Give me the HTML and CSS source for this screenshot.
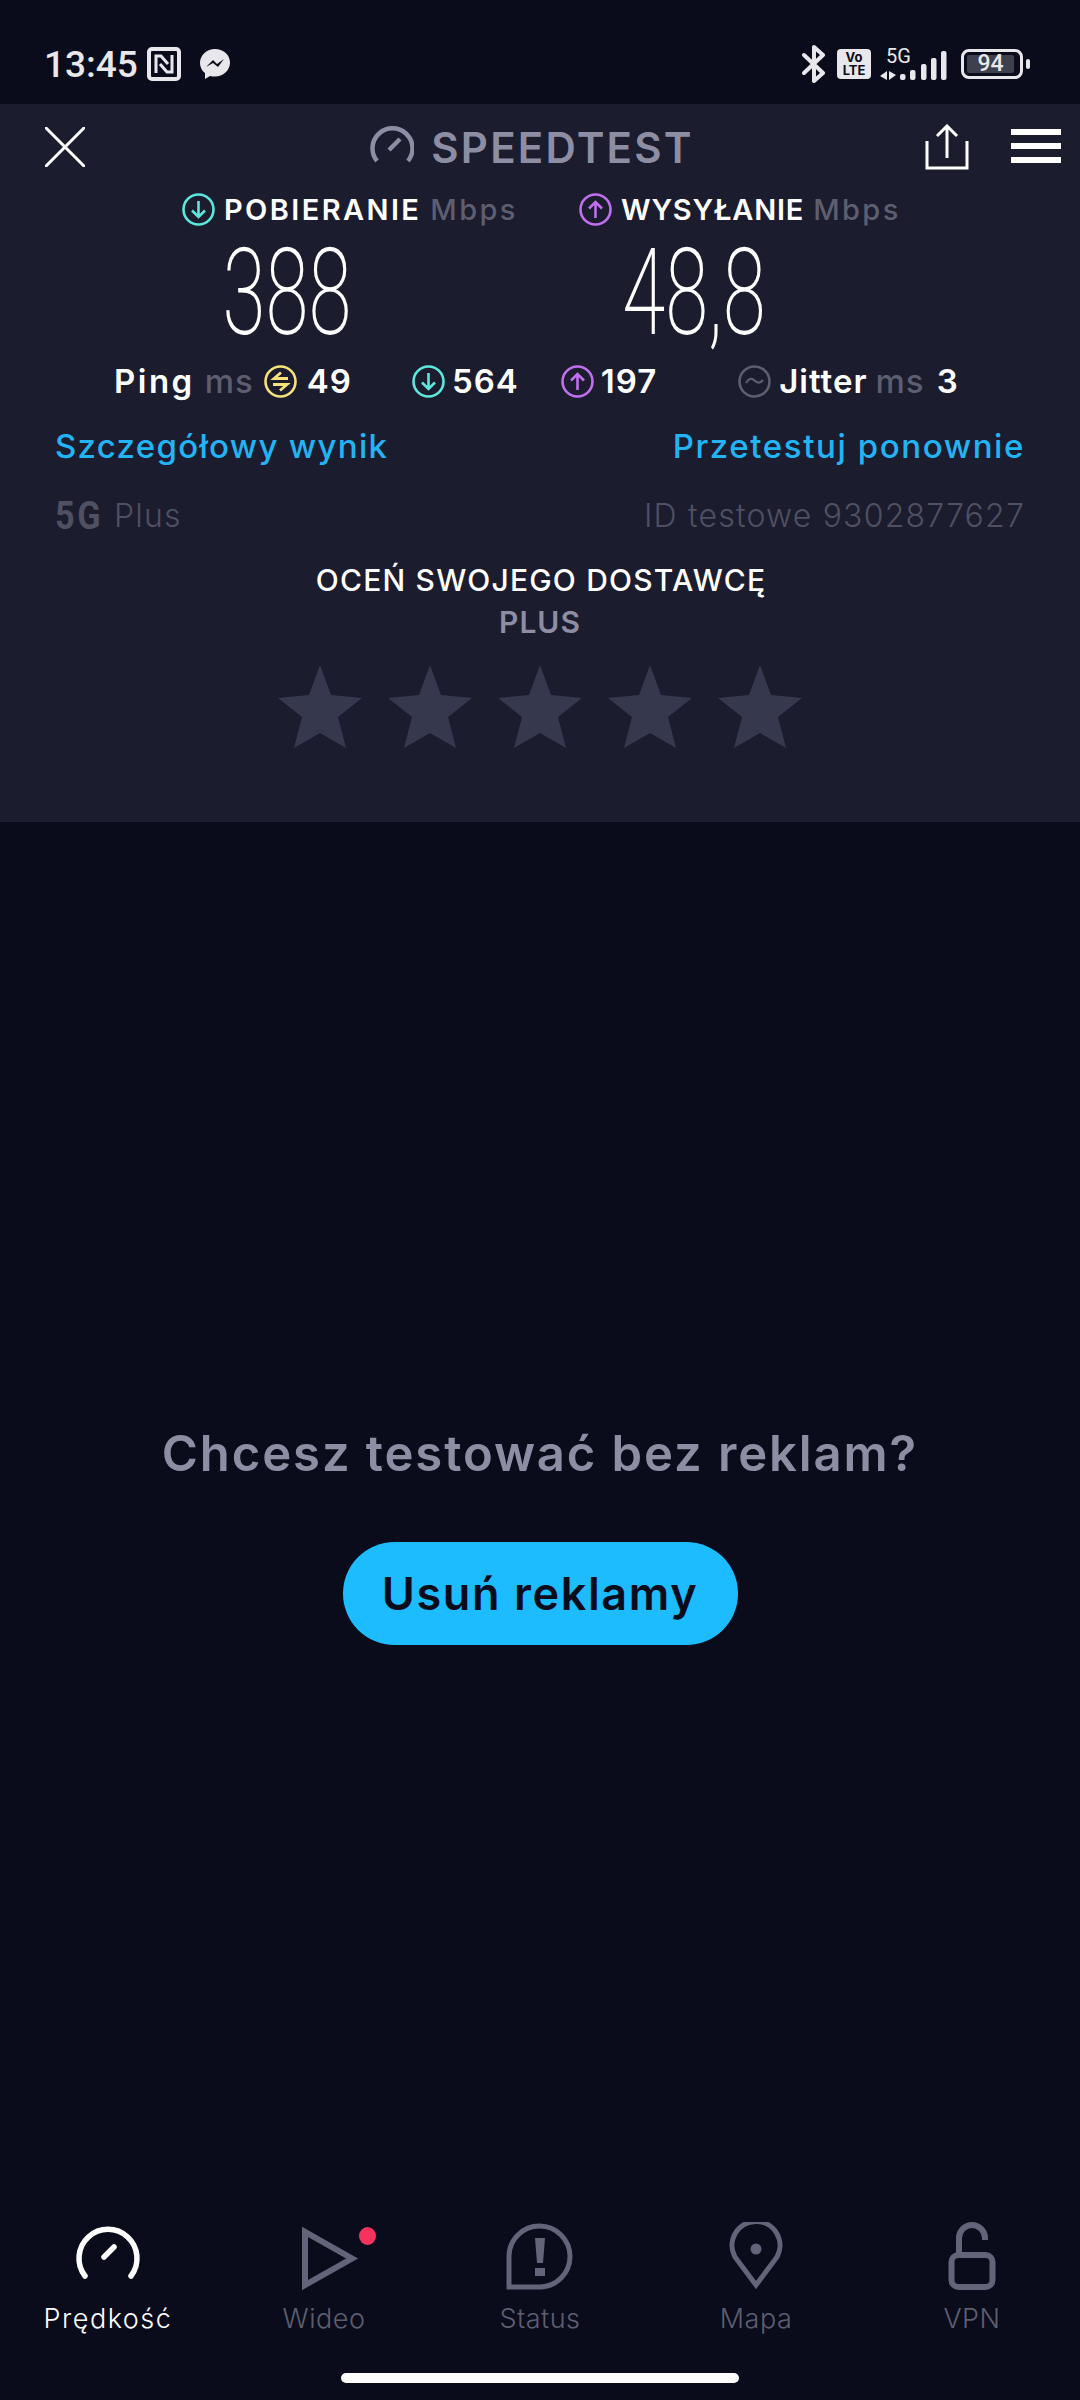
FILE: index.html
```html
<!DOCTYPE html>
<html lang="pl">
<head>
    <meta charset="UTF-8">
    <title>Speedtest</title>
    <link rel="stylesheet" href="styles.css">
</head>
<body>

    <div class="status-bar">
        <div class="status-left">
            <span class="time">13:45</span>
            <svg class="nfc" viewBox="0 0 34 34"><rect x="2" y="2" width="30" height="30" rx="3" fill="#0a0c1b" stroke="#e8e8ec" stroke-width="4"/><path d="M9 26V9h5l7 8M25 8v17h-5l-7-8" fill="none" stroke="#e8e8ec" stroke-width="3"/></svg>
            <svg class="messenger" viewBox="0 0 30 32"><path d="M15 1C7 1 0 7 0 15c0 4 2 8 5 10v6l5-3c2 .5 3 .6 5 .6 8 0 15-6 15-14S23 1 15 1z" fill="#e8e8ec"/><path d="M6 19l7-7 4 4 7-5-6 8-5-4z" fill="#0a0c1b"/></svg>
        </div>
        <div class="status-right">
            <svg class="bt" viewBox="0 0 24 38"><path d="M2 10l19 18-9 8V2l9 8L2 28" fill="none" stroke="#e8e8ec" stroke-width="4" stroke-linejoin="round" stroke-linecap="round"/></svg>
            <div class="volte"><span>Vo</span><span>LTE</span></div>
            <div class="signal">
                <span class="five-g">5G</span>
                <svg viewBox="0 0 67 36"><path d="M7 25v9L0 30zM9 25v9l7-5z" fill="#e8e8ec"/><rect x="20" y="28" width="5.500" height="6" rx="2" fill="#e8e8ec"/><rect x="30" y="24" width="5.500" height="10" rx="2" fill="#e8e8ec"/><rect x="41" y="18" width="5.500" height="16" rx="2" fill="#e8e8ec"/><rect x="51" y="12" width="5.500" height="22" rx="2" fill="#e8e8ec"/><rect x="61" y="5" width="5.500" height="29" rx="2" fill="#e8e8ec"/></svg>
            </div>
            <div class="battery">
                <div class="battery-body"><div class="battery-fill">94</div></div>
                <div class="battery-tip"></div>
            </div>
        </div>
    </div>

    <div class="panel">
        <div class="app-bar">
            <svg class="close-icon" viewBox="0 0 40 40"><path d="M1 1l38 38M39 1L1 39" stroke="#fff" stroke-width="3" stroke-linecap="round"/></svg>
            <div class="app-title">
                <svg class="title-gauge" viewBox="0 0 44 40"><path d="M7 36a20 20 0 1 1 31 0" fill="none" stroke="#8d8ea3" stroke-width="4.500"/><path d="M19 25l11-11" stroke="#8d8ea3" stroke-width="4.500"/></svg>
                <span>SPEEDTEST</span>
            </div>
            <svg class="share-icon" viewBox="0 0 44 46"><path d="M2 17v27h40V17M22 34V3M12 12l10-10 10 10" fill="none" stroke="#fff" stroke-width="3"/></svg>
            <div class="menu-icon"><i></i><i></i><i></i></div>
        </div>

        <div class="results">
            <div class="result">
                <div class="result-label">
                    <svg class="dot-icon" viewBox="0 0 33 33"><circle cx="16.500" cy="16.500" r="15" fill="none" stroke="#5ce8dd" stroke-width="2.600"/><path d="M16.500 8v16M10 17.500l6.500 6.500 6.500-6.500" fill="none" stroke="#5ce8dd" stroke-width="2.600"/></svg>
                    <b>POBIERANIE</b> <em>Mbps</em>
                </div>
                <div class="big-number">388</div>
            </div>
            <div class="result result-up">
                <div class="result-label">
                    <svg class="dot-icon" viewBox="0 0 33 33"><circle cx="16.500" cy="16.500" r="15" fill="none" stroke="#c070ee" stroke-width="2.600"/><path d="M16.500 25V9M10 15.500L16.500 9l6.500 6.500" fill="none" stroke="#c070ee" stroke-width="2.600"/></svg>
                    <b>WYSYŁANIE</b> <em>Mbps</em>
                </div>
                <div class="big-number">48,8</div>
            </div>
        </div>

        <div class="stats">
            <div class="stat stat-ping">
                <b class="ping-name">Ping</b> <em>ms</em>
                <svg class="dot-icon" viewBox="0 0 33 33"><circle cx="16.500" cy="16.500" r="15" fill="none" stroke="#f6e27a" stroke-width="2.600"/><path d="M24 13.500H10l7-6M9 19.500h14l-7 6" fill="none" stroke="#f6e27a" stroke-width="2.800"/></svg>
                <b>49</b>
            </div>
            <div class="stat stat-down">
                <svg class="dot-icon" viewBox="0 0 33 33"><circle cx="16.500" cy="16.500" r="15" fill="none" stroke="#5ce8dd" stroke-width="2.600"/><path d="M16.500 8v16M10 17.500l6.500 6.500 6.500-6.500" fill="none" stroke="#5ce8dd" stroke-width="2.600"/></svg>
                <b>564</b>
            </div>
            <div class="stat stat-up">
                <svg class="dot-icon" viewBox="0 0 33 33"><circle cx="16.500" cy="16.500" r="15" fill="none" stroke="#c070ee" stroke-width="2.600"/><path d="M16.500 25V9M10 15.500L16.500 9l6.500 6.500" fill="none" stroke="#c070ee" stroke-width="2.600"/></svg>
                <b>197</b>
            </div>
            <div class="stat stat-jitter">
                <svg class="dot-icon" viewBox="0 0 33 33"><circle cx="16.500" cy="16.500" r="15" fill="none" stroke="#5d5e70" stroke-width="2.600"/><path d="M8 18c3-5 6-5 8.500-2.500S22 19 25 15" fill="none" stroke="#5d5e70" stroke-width="2.200"/></svg>
                <b>Jitter</b> <em>ms</em> <b class="jitter-val">3</b>
            </div>
        </div>

        <div class="links">
            <span>Szczegółowy wynik</span>
            <span class="retest">Przetestuj ponownie</span>
        </div>

        <div class="meta">
            <div class="carrier"><span class="carrier-5g">5G</span> Plus</div>
            <div>ID testowe 9302877627</div>
        </div>

        <div class="rate-title">OCEŃ SWOJEGO DOSTAWCĘ</div>
        <div class="rate-name">PLUS</div>
        <div class="stars">
            <svg viewBox="0 0 86 84"><path d="M43 0l11 30 31 3-24 19 8 31-26-15-26 15 8-31L1 33l31-3z"/></svg>
            <svg viewBox="0 0 86 84"><path d="M43 0l11 30 31 3-24 19 8 31-26-15-26 15 8-31L1 33l31-3z"/></svg>
            <svg viewBox="0 0 86 84"><path d="M43 0l11 30 31 3-24 19 8 31-26-15-26 15 8-31L1 33l31-3z"/></svg>
            <svg viewBox="0 0 86 84"><path d="M43 0l11 30 31 3-24 19 8 31-26-15-26 15 8-31L1 33l31-3z"/></svg>
            <svg viewBox="0 0 86 84"><path d="M43 0l11 30 31 3-24 19 8 31-26-15-26 15 8-31L1 33l31-3z"/></svg>
        </div>
    </div>

    <div class="promo">
        <h2>Chcesz testować bez reklam?</h2>
        <button class="remove-btn">Usuń reklamy</button>
    </div>

    <div class="tabs">
        <div class="tab active">
            <svg viewBox="0 0 70 70"><path d="M12 54a29 29 0 1 1 46 0" fill="none" stroke="#fff" stroke-width="5.500" stroke-linecap="round"/><path d="M31 35l10-10" stroke="#fff" stroke-width="5.500" stroke-linecap="round"/></svg>
            <span>Prędkość</span>
        </div>
        <div class="tab">
            <svg viewBox="0 0 70 70"><path d="M16 10v53l47-26.500z" fill="none" stroke="#62647a" stroke-width="6"/></svg>
            <i class="tab-dot"></i>
            <span>Wideo</span>
        </div>
        <div class="tab">
            <svg viewBox="0 0 70 70"><path d="M4 65V34a30.500 30.500 0 1 1 31 31z" fill="none" stroke="#62647a" stroke-width="5"/><path d="M30 16h10l-2 25h-6zM30 46h10v8h-10z" fill="#62647a"/></svg>
            <span>Status</span>
        </div>
        <div class="tab">
            <svg viewBox="0 0 70 70"><path d="M35 63L14 35a24 24 0 1 1 42 0z" fill="none" stroke="#62647a" stroke-width="5"/><circle cx="35" cy="27" r="5.500" fill="#62647a"/></svg>
            <span>Mapa</span>
        </div>
        <div class="tab">
            <svg viewBox="0 0 70 70"><rect x="14.500" y="33" width="41" height="32" rx="7" fill="none" stroke="#62647a" stroke-width="6"/><path d="M22 33V16a13 13 0 0 1 26 0v2" fill="none" stroke="#62647a" stroke-width="6"/></svg>
            <span>VPN</span>
        </div>
    </div>

    <div class="home-bar"></div>

</body>
</html>
```

FILE: styles.css
```css
* { margin: 0; padding: 0; box-sizing: border-box; }
body {
    width: 1080px; height: 2400px; overflow: hidden;
    background: #0a0c1b; color: #fff;
    font-family: Inter, "Noto Sans", sans-serif;
    display: flex; flex-direction: column;
}
b { font-weight: 600; }
em { font-style: normal; font-weight: 500; color: #5d5e70; }

/* status bar */
.status-bar {
    height: 104px; flex: none; padding: 24px 50px 0 44px;
    display: flex; justify-content: space-between; align-items: center;
}
.status-bar > div { display: flex; align-items: center; }
.time { font-family: Roboto, sans-serif; font-size: 37px; font-weight: 500; color: #e8e8ec; }
.nfc { width: 34px; height: 34px; margin-left: 9px; }
.messenger { width: 30px; height: 32px; margin-left: 19px; }
.bt { width: 24px; height: 38px; }
.volte {
    width: 34px; height: 30px; margin-left: 11px; background: #e8e8ec; border-radius: 4px;
    display: flex; flex-direction: column; align-items: center; justify-content: center;
    font-size: 13px; line-height: 13px; font-weight: 700; color: #0a0c1b;
}
.signal { position: relative; width: 67px; height: 36px; margin-left: 9px; }
.signal svg { display: block; width: 67px; height: 36px; }
.five-g {
    position: absolute; left: 6px; top: 0;
    font-family: Roboto, sans-serif; font-size: 20px; line-height: 20px; color: #e8e8ec;
}
.battery { display: flex; align-items: center; margin-left: 14px; }
.battery-body { width: 62px; height: 30px; border: 3px solid #e8e8ec; border-radius: 8px; padding: 3px 6px 3px 3px; }
.battery-fill {
    height: 18px; background: #3f404e; border-radius: 2px;
    font-family: Roboto, sans-serif; font-size: 23px; line-height: 18px; font-weight: 500; text-align: center; color: #e8e8ec;
}
.battery-tip { width: 4px; height: 10px; margin-left: 3px; background: #e8e8ec; border-radius: 2px; }

/* results panel */
.panel { height: 718px; flex: none; background: #1b1c2e; }
.app-bar { height: 86px; position: relative; display: flex; align-items: center; padding: 0 19px 0 45px; }
.close-icon { width: 40px; height: 40px; }
.app-title {
    flex: 1; display: flex; align-items: center; justify-content: center; gap: 17px;
    font-size: 42px; font-weight: 600; color: #8d8ea3; letter-spacing: 2.2px; margin-left: 54px;
}
.title-gauge { width: 44px; height: 40px; margin-top: -4px; }
.share-icon { width: 44px; height: 46px; margin-right: 42px; }
.menu-icon { width: 50px; display: flex; flex-direction: column; gap: 8px; margin-top: -2px; }
.menu-icon i { display: block; height: 6px; background: #fff; }

.results { display: flex; height: 168px; margin-top: 1px; }
.result { width: 397px; margin-left: 182px; }
.result-up { margin-left: 0; }
.result-label { height: 36px; display: flex; align-items: center; gap: 9px; font-size: 29px; letter-spacing: 2.4px; white-space: nowrap; }
.result-up b { letter-spacing: 0.8px; }
.dot-icon { width: 33px; height: 33px; flex: none; }
.big-number {
    width: 400px; margin-left: -95px; margin-top: 4px; text-align: center;
    font-family: Roboto, sans-serif; font-weight: 200; font-size: 120px; line-height: 125px;
    transform: scaleX(0.65);
}
.result-up .big-number { margin-left: -85px; }

.stats { height: 44px; padding-left: 114px; display: flex; align-items: center; font-size: 33px; letter-spacing: 1px; white-space: nowrap; }
.stat { display: flex; align-items: center; gap: 8px; }
.ping-name { letter-spacing: 2.5px; }
.stat-ping { gap: 10px; }
.stat-down { margin-left: 60px; gap: 7px; }
.stat-up { margin-left: 42px; gap: 7px; }
.stat-jitter { margin-left: 81px; }
.jitter-val { margin-left: 4px; }

.links {
    display: flex; justify-content: space-between; padding: 0 55px; margin-top: 22px;
    font-size: 33px; line-height: 42px; font-weight: 500; letter-spacing: 1.3px; color: #22b4f4;
}
.retest { letter-spacing: 1.6px; }
.meta {
    display: flex; justify-content: space-between; padding: 0 55px; margin-top: 28px;
    font-size: 32px; line-height: 42px; font-weight: 300; letter-spacing: 1.2px; color: #4f5062;
}
.carrier { display: flex; align-items: center; }
.carrier-5g {
    display: inline-block; width: 46px; margin-right: 13px; transform: scaleX(0.9); transform-origin: left;
    font-family: Roboto, sans-serif; font-weight: 700; font-size: 38px; letter-spacing: 3px;
}
.rate-title { margin-top: 22px; margin-left: 2px; text-align: center; font-size: 30px; line-height: 42px; font-weight: 500; letter-spacing: 1.2px; }
.rate-name { text-align: center; font-size: 30px; line-height: 42px; font-weight: 600; letter-spacing: 1px; color: #8d8ea3; }
.stars { display: flex; justify-content: center; gap: 24px; margin-top: 22px; }
.stars svg { width: 86px; height: 84px; fill: #36384e; }

/* ad promo */
.promo { flex: 1; display: flex; flex-direction: column; align-items: center; padding-top: 597px; }
.promo h2 { font-size: 49px; line-height: 70px; font-weight: 600; letter-spacing: 1.9px; color: #8d8ea3; }
.remove-btn {
    width: 395px; height: 103px; margin-top: 53px; border: none; border-radius: 52px;
    background: #1cbcff; color: #0a0c1b;
    font-family: inherit; font-size: 45px; font-weight: 600; letter-spacing: 1.6px;
}

/* bottom tabs */
.tabs { flex: none; display: flex; height: 120px; }
.tab { width: 216px; position: relative; display: flex; flex-direction: column; align-items: center; color: #5d5e70; font-size: 27px; font-weight: 300; letter-spacing: 0.5px; }
.tab svg { width: 70px; height: 70px; flex: none; }
.tab span { margin-top: 9px; line-height: 36px; }
.tab.active { color: #fff; letter-spacing: 1.5px; }
.tab-dot { position: absolute; left: 143px; top: 5px; width: 17px; height: 18px; border-radius: 50%; background: #f7325f; }

.home-bar { flex: none; width: 398px; height: 10px; margin: 31px auto 17px; background: #fff; border-radius: 5px; }
```
